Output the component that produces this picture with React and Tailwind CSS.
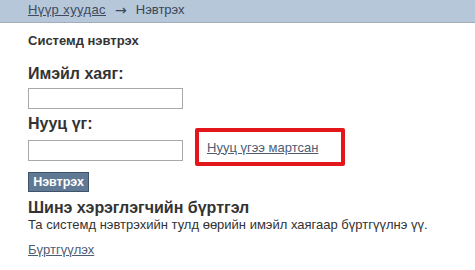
export default function App() {
  return (
    <div className="w-[475px] h-[270px] bg-white overflow-hidden text-[#333]" style={{ fontFamily: '"Liberation Sans", Arial, sans-serif' }}>
      <div className="h-[23px] bg-[#b6c7da] border-b border-[#a3acb9] pl-[28px] pt-[2px] flex items-start text-[13px] leading-[16px] text-[#3a4656]">
        <a href="#" className="underline text-[#3f4b5c] tracking-[0.4px]">Нүүр хуудас</a>
        <span className="mx-[9px] text-[14px] leading-[16px] font-['DejaVu_Sans',sans-serif]">→</span>
        <span>Нэвтрэх</span>
      </div>
      <div className="pl-[28px]">
        <div className="mt-[11px] text-[13px] font-bold leading-[14px]">Системд нэвтрэх</div>
        <div className="mt-[17px] text-[16px] font-bold leading-[18px]">Имэйл хаяг:</div>
        <input className="mt-[5px] block w-[155px] h-[21px] border border-[#a9a9a9] bg-white" />
        <div className="flex items-end">
          <div className="pb-[5px]">
            <div className="mt-[6px] text-[16px] font-bold leading-[18px]">Нууц үг:</div>
            <input className="mt-[7px] block w-[155px] h-[21px] border border-[#a9a9a9] bg-white" />
          </div>
          <div className="ml-[12px] w-[150px] h-[38px] border-[4px] border-[#e3161c] rounded-[2px] flex items-center pl-[8px]">
            <a href="#" className="text-[13px] leading-[15px] underline text-[#4d5d74]">Нууц үгээ мартсан</a>
          </div>
        </div>
        <button className="mt-[6px] block h-[20px] w-[61px] bg-[#5f7995] border border-[#3f536b] text-white text-[12.5px] font-bold leading-none">Нэвтрэх</button>
        <div className="mt-[7px] text-[16px] font-bold leading-[18px]">Шинэ хэрэглэгчийн бүртгэл</div>
        <div className="text-[13px] leading-[16px]">Та системд нэвтрэхийн тулд өөрийн имэйл хаягаар бүртгүүлнэ үү.</div>
        <a href="#" className="block mt-[9px] text-[13px] leading-[16px] underline text-[#4d5d74]">Бүртгүүлэх</a>
      </div>
    </div>
  );
}
